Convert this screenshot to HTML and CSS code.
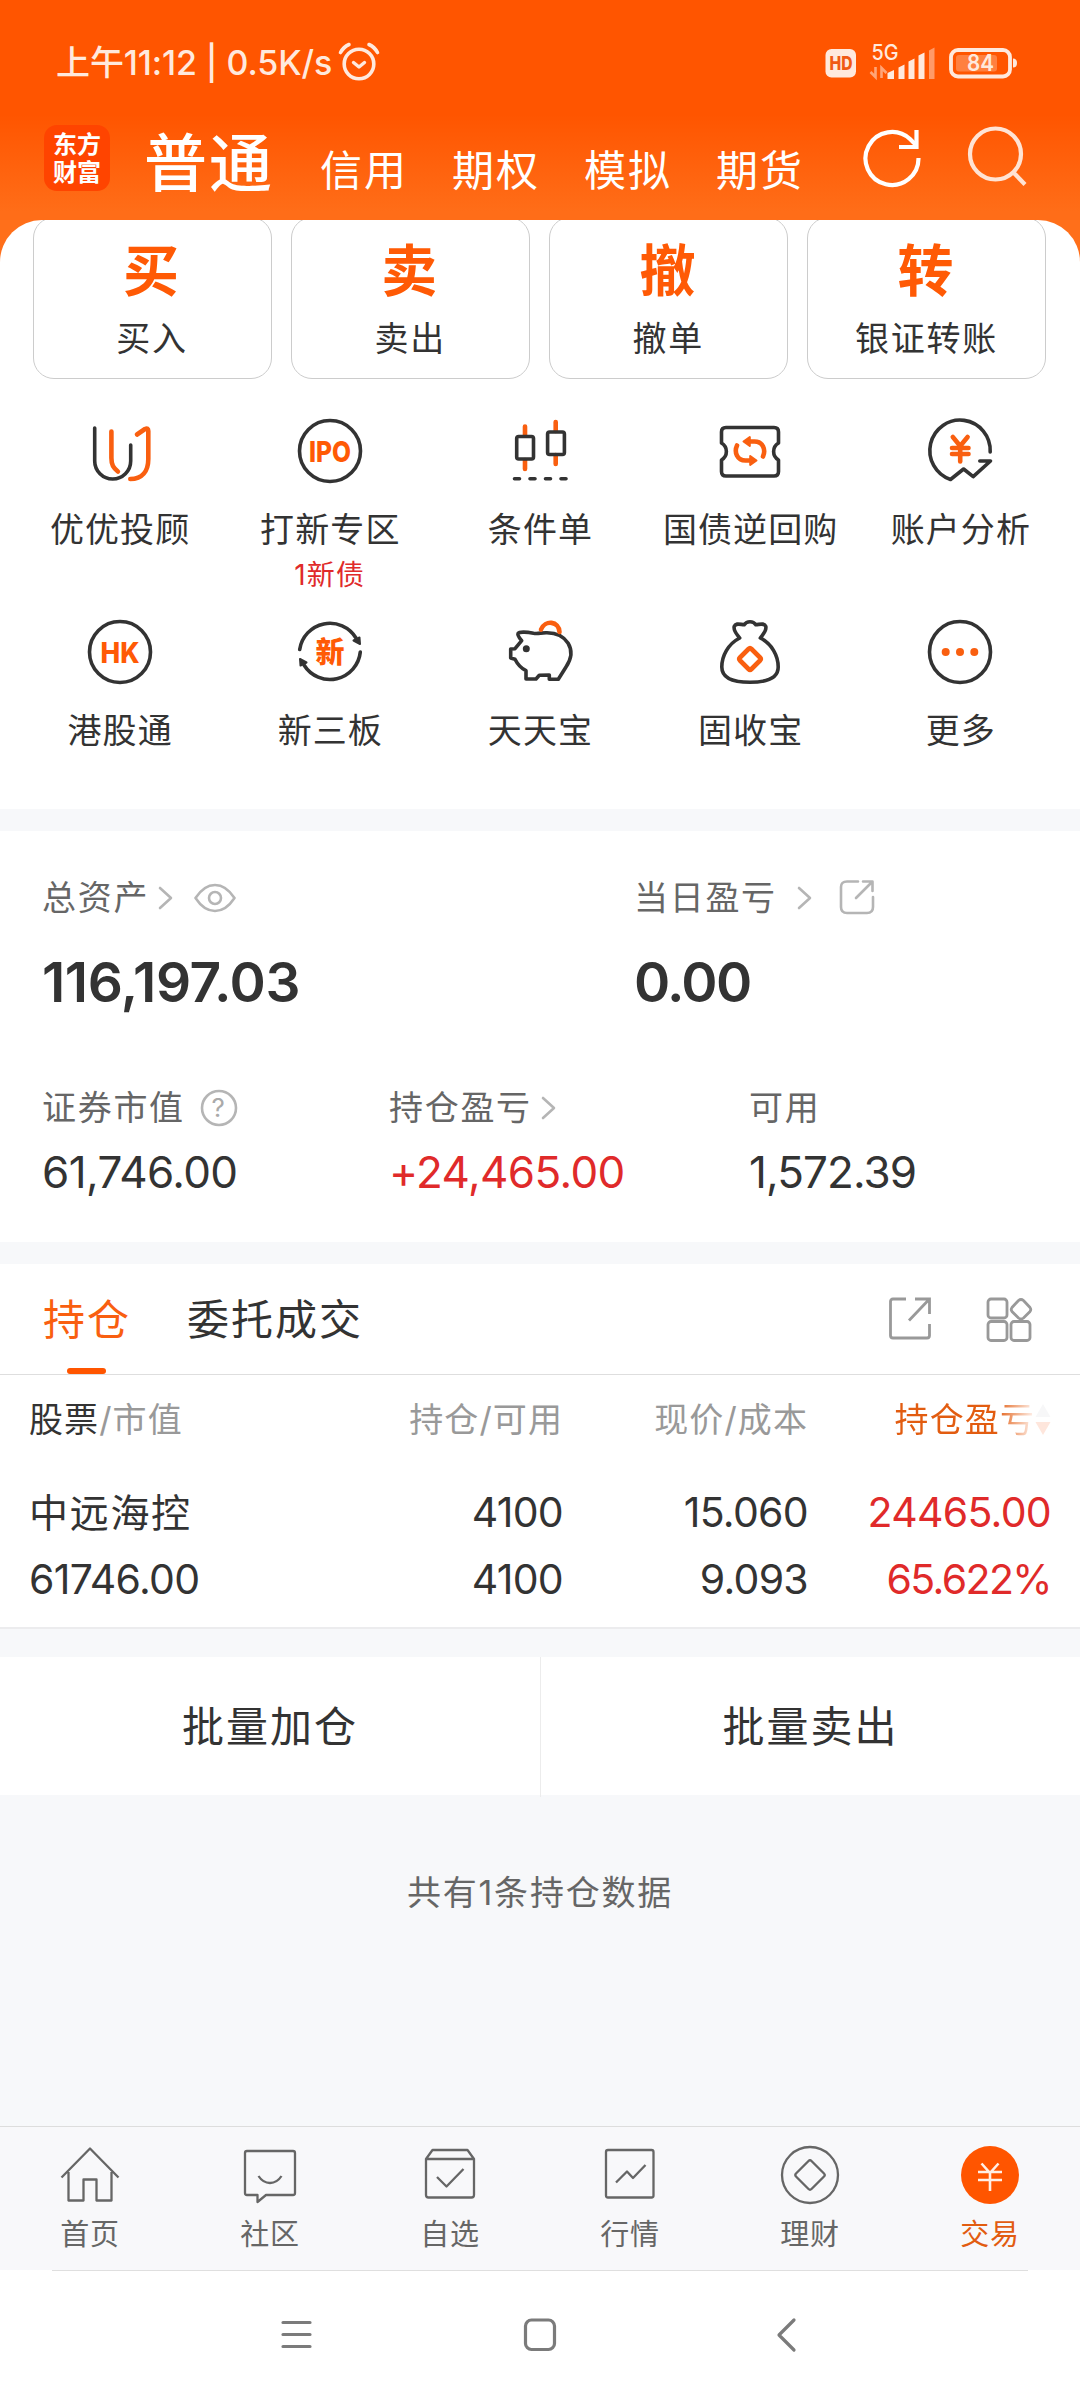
FILE: index.html
```html
<!DOCTYPE html>
<html lang="zh-CN">
<head>
<meta charset="utf-8">
<title>东方财富 交易</title>
<link rel="stylesheet" href="styles.css">
</head>
<body>
<div class="screen">
  <header class="top">
    <div class="status">
      <div class="status-left">
        <span class="clock">上午11:12 | 0.5K/s</span>
        <svg class="alarm" width="42" height="40" viewBox="0 0 42 40" fill="none" stroke="#ffe9dd" stroke-width="3.6" stroke-linecap="round" stroke-linejoin="round"><circle cx="21" cy="22" r="14.8"/><path d="M15.5 20.5l5.5 4.5 5.5-4.5" stroke-width="3.4"/><path d="M2.5 10.5q3-5.5 8.500-8M39.500 10.500q-3-5.500-8.500-8"/></svg>
      </div>
      <svg class="indicators" width="200" height="44" viewBox="0 0 200 44">
        <rect x="5.500" y="9" width="30.500" height="28.500" rx="6" fill="#ffe9dd"/>
        <text x="21" y="30" class="hd" text-anchor="middle" textLength="23" lengthAdjust="spacingAndGlyphs">HD</text>
        <text x="51.500" y="19.500" class="net" textLength="27" lengthAdjust="spacingAndGlyphs">5G</text>
        <path d="M55.500 27v10l-5-5M61.500 38V28l5 5" fill="none" stroke="#ffa578" stroke-width="2.600"/>
        <g fill="#ffe9dd"><path d="M67.500 33l6.500-3v9h-6.500zM78.500 27.500l6-3V39h-6zM88.500 21.500l6-3V39h-6zM98.500 15.500l6-3V39h-6z"/><path d="M109 10.500l5.500-3V39H109z" fill="#ff9a68"/></g>
        <rect x="131" y="10" width="59" height="26.500" rx="7" fill="none" stroke="#ffe9dd" stroke-width="3.800"/>
        <rect x="136" y="15" width="41" height="16.500" rx="3" fill="#ff8040"/>
        <path d="M193 18.500q4 0 4 4.500t-4 4.500z" fill="#ffe9dd"/>
        <text x="160.500" y="31" class="charge" text-anchor="middle" textLength="27" lengthAdjust="spacingAndGlyphs">84</text>
      </svg>
    </div>
    <nav class="account-nav">
      <div class="logo">东方<br>财富</div>
      <div class="account-tabs">
        <span class="account-tab current">普通</span>
        <span class="account-tab">信用</span>
        <span class="account-tab">期权</span>
        <span class="account-tab">模拟</span>
        <span class="account-tab">期货</span>
      </div>
      <div class="header-tools">
        <svg width="64" height="64" viewBox="0 0 64 64" fill="none" stroke="#fff" stroke-width="4.200"><path d="M57.500 33A26.500 26.500 0 1 1 49 14l6 6"/><path d="M55.500 5v17H38"/></svg>
        <svg width="64" height="64" viewBox="0 0 64 64" fill="none" stroke="#ffe3d4" stroke-width="4.200"><circle cx="28.500" cy="29" r="25.500"/><path d="M46 47l12 12.500"/></svg>
      </div>
    </nav>
  </header>

  <main>
    <div class="sheet-back">
      <section class="sheet">
        <div class="actions">
          <div class="action"><b>买</b><span>买入</span></div>
          <div class="action"><b>卖</b><span>卖出</span></div>
          <div class="action"><b>撤</b><span>撤单</span></div>
          <div class="action"><b>转</b><span>银证转账</span></div>
        </div>
        <div class="tools">
          <div class="tool">
            <svg class="ic" viewBox="0 0 100 100"><path d="M24.700 27V60a18 18 0 0 0 36 0V44"/><g class="o"><path d="M41.400 30.500V57c0 7 2 10 6.500 13.500M67 33.500l8-5.500q3.300-1.500 3.300 2V58c0 12-6 20-18 20"/></g></svg>
            <span>优优投顾</span>
          </div>
          <div class="tool">
            <svg class="ic" viewBox="0 0 100 100"><circle cx="50" cy="50" r="30.500"/><text x="50" y="60.500" textLength="42" lengthAdjust="spacingAndGlyphs">IPO</text></svg>
            <span>打新专区</span><em>1新债</em>
          </div>
          <div class="tool">
            <svg class="ic" viewBox="0 0 100 100"><g class="o"><path d="M35 25.500v9M35 59v9M65.700 21v9M65.700 54v9"/></g><rect x="26.700" y="35.500" width="16.800" height="22.500" rx="2"/><rect x="57.600" y="31" width="16.800" height="22.500" rx="2"/><path d="M24.500 77.700h5M40 77.700h5M55.500 77.700h5M71 77.700h5"/></svg>
            <span>条件单</span>
          </div>
          <div class="tool">
            <svg class="ic" viewBox="0 0 100 100"><path d="M26 26.500H74q4.500 0 4.500 4.500V42c-6.500 4-6.500 13 0 17V70.500q0 4.500-4.500 4.500H26q-4.500 0-4.500-4.500V59c6.500-4 6.500-13 0-17V31q0-4.500 4.500-4.500z"/><g class="o"><path d="M50 40.500h4.500C63 40.500 66 49 63 55.500M50 59.500h-4.500C37 59.500 34 51 37 44.500"/><path class="fill" d="M43.500 40.500l6.300-4.500v9zM56.500 59.500l-6.300 4.500v-9z" stroke-width="2"/></g></svg>
            <span>国债逆回购</span>
          </div>
          <div class="tool">
            <svg class="ic" viewBox="0 0 100 100"><path d="M80.200 51A30.200 30.500 0 1 0 40.500 78.500L53.600 68l9.600 7.700L80.500 60H69.800"/><g class="o"><path d="M42.800 36l7.400 9 7.400-9M50.200 45v15.500M42 47h16.500M42 53h16.500"/></g></svg>
            <span>账户分析</span>
          </div>
          <div class="tool">
            <svg class="ic" viewBox="0 0 100 100"><circle cx="50" cy="50" r="30.500"/><text x="50" y="60.500" textLength="39" lengthAdjust="spacingAndGlyphs">HK</text></svg>
            <span>港股通</span>
          </div>
          <div class="tool">
            <svg class="ic" viewBox="0 0 100 100"><path d="M19.700 47.500A30.500 30.500 0 0 1 76 36M80.300 50A30.500 30.500 0 0 1 24 63"/><path class="dark" d="M73.500 38.500l6-3 .5 6.500zM26.500 60.500l-6 3-.5-6.500z" stroke-width="2"/><text class="cn" x="50" y="61">新</text></svg>
            <span>新三板</span>
          </div>
          <div class="tool">
            <svg class="ic" viewBox="0 0 100 100"><path d="M31.700 38.700L25 46.700 20.700 47v9l4.300 1.300q4 8 11 11.400V77H46l3.300-3.700 10-.3v4.300h9L76 65C88 47 76 31 57 30.700c-6-.2-8 1.300-13.500.6-5-1-14-2-15.500.2-.8 1.500 1 4 3.700 7.200z"/><circle class="dark" cx="36.300" cy="46.700" r="2" stroke-width="3"/><g class="o"><path d="M51 27.500C55 17.500 69 19 69.500 30"/></g></svg>
            <span>天天宝</span>
          </div>
          <div class="tool">
            <svg class="ic" viewBox="0 0 100 100"><path d="M39.700 36C28 42 21.800 54 21.800 65c0 11 12 15.300 28.200 15.300S78.200 76 78.200 65C78.200 54 72 42 60.300 36c3-4 6.500-7 5.500-11.500-1.500-4-6-2-10-1.800-2.500-4-9.100-4-11.600 0-4-.2-8.500-2.200-10 1.800-1 4.500 2.500 7.500 5.500 11.500z"/><g class="o"><path d="M48.500 47l-8.500 8.500q-1.500 1.500 0 3l8.500 8.500q1.500 1.500 3 0l8.500-8.500q1.500-1.500 0-3L51.500 47q-1.500-1.500-3 0z" stroke-width="4.600"/></g></svg>
            <span>固收宝</span>
          </div>
          <div class="tool">
            <svg class="ic" viewBox="0 0 100 100"><circle cx="50" cy="50" r="30.500"/><g fill="#f95f10" stroke="none"><circle cx="35.700" cy="50" r="4"/><circle cx="50" cy="50" r="4"/><circle cx="64.300" cy="50" r="4"/></g></svg>
            <span>更多</span>
          </div>
        </div>
      </section>
    </div>

    <section class="assets">
      <div class="assets-main">
        <div>
          <div class="cap"><span>总资产</span>
            <svg class="chev" viewBox="0 0 16 24"><path d="M2 2l11 10L2 22"/></svg>
            <svg class="eye" viewBox="0 0 42 30"><path d="M1.500 15Q10 2 21 2t19.500 13Q32 28 21 28T1.500 15z"/><circle cx="21" cy="15" r="6"/></svg></div>
          <div class="big">116,197.03</div>
        </div>
        <div>
          <div class="cap"><span>当日盈亏</span>
            <svg class="chev far" viewBox="0 0 16 24"><path d="M2 2l11 10L2 22"/></svg>
            <svg class="share" viewBox="0 0 36 36"><path d="M19 2.500H8Q2 2.500 2 8v20q0 6 6 6h20q6 0 6-6V18M17 19L33 3M24 2.500h9.500V12"/></svg></div>
          <div class="big wide">0.00</div>
        </div>
      </div>
      <div class="assets-sub">
        <div>
          <div class="cap"><span>证券市值</span>
            <svg class="help" viewBox="0 0 38 38"><circle cx="19" cy="19" r="17"/><text x="19" y="28" text-anchor="middle">?</text></svg></div>
          <div class="mid">61,746.00</div>
        </div>
        <div>
          <div class="cap"><span>持仓盈亏</span><svg class="chev" viewBox="0 0 16 24"><path d="M2 2l11 10L2 22"/></svg></div>
          <div class="mid red">+24,465.00</div>
        </div>
        <div>
          <div class="cap"><span>可用</span></div>
          <div class="mid tight">1,572.39</div>
        </div>
      </div>
    </section>

    <section class="holdings">
      <div class="tabs">
        <div class="tab active">持仓</div>
        <div class="tab">委托成交</div>
        <div class="tab-tools">
          <svg width="44" height="46" viewBox="0 0 44 46"><path d="M18 3H5Q2.500 3 2.500 5.500v34Q2.500 42 5 42h34q2.500 0 2.500-2.500V28M21 24.500L41 3.500M27 3h14.500v15"/></svg>
          <svg width="50" height="46" viewBox="0 0 50 46"><rect x="4" y="3" width="19" height="19" rx="3"/><rect x="4" y="25.500" width="19" height="19" rx="3"/><rect x="27" y="25.500" width="19" height="19" rx="3"/><path d="M34.500 4.500l-6.500 7q-1.500 2 0 4l6.500 6.500q2.500 2 5 0l6.500-6.500q1.500-2 0-4l-6.500-7q-2.500-2-5 0z"/></svg>
        </div>
      </div>
      <div class="grid head">
        <div><span class="ink">股票</span>/市值</div>
        <div>持仓/可用</div>
        <div>现价/成本</div>
        <div class="sort"><span>持仓盈亏</span><svg width="16" height="34" viewBox="0 0 16 34"><path d="M8 1l7.500 13H.5z" fill="#f7f7f8"/><path d="M8 32l7.500-13H.5z" fill="#fee6dc"/></svg></div>
      </div>
      <div class="grid row">
        <div class="name">中远海控</div><div>4100</div><div>15.060</div><div class="red">24465.00</div>
        <div>61746.00</div><div>4100</div><div>9.093</div><div class="red percent">65.622%</div>
      </div>
    </section>

    <section class="batch"><div>批量加仓</div><div>批量卖出</div></section>
    <p class="note">共有1条持仓数据</p>
  </main>

  <nav class="bottom">
    <div class="item"><svg viewBox="0 0 64 64"><path d="M3.500 34.500L32 5.500l28.500 29M10.500 29v28.500h15V36.500h13v21h15V29"/></svg><span>首页</span></div>
    <div class="item"><svg viewBox="0 0 64 64"><path d="M9 8h46q2 0 2 2v40q0 2-2 2H28l-8.500 7V52H9q-2 0-2-2V10q0-2 2-2z"/><path d="M20.500 33q4.500 7 11.500 7t11.500-7"/></svg><span>社区</span></div>
    <div class="item"><svg viewBox="0 0 64 64"><path d="M8 16l6.500-9h35L56 16v36q0 2.500-2.500 2.500h-43Q8 54.500 8 52zM8 16h48M19 34l9.500 9.500L45.500 26"/></svg><span>自选</span></div>
    <div class="item"><svg viewBox="0 0 64 64"><rect x="8" y="7" width="47.500" height="47.500" rx="2"/><path d="M18 39.500l11-11 6 6.500 12.500-13"/></svg><span>行情</span></div>
    <div class="item"><svg viewBox="0 0 64 64"><circle cx="32" cy="32" r="28"/><path d="M30.500 18L18 30.500q-1.500 1.500 0 3L30.500 46q1.500 1.500 3 0L46 33.500q1.500-1.500 0-3L33.500 18q-1.500-1.500-3 0z"/></svg><span>理财</span></div>
    <div class="item on"><svg viewBox="0 0 64 64"><circle cx="32" cy="32" r="29" fill="#ff5500" stroke="none"/><path d="M23.500 20.500L32 30l8.500-9.500M32 30v18M20 29h24M20 37h24" stroke="#ffeee5" stroke-width="2.600"/></svg><span>交易</span></div>
  </nav>
  <div class="system">
    <svg width="40" height="40" viewBox="0 0 40 40"><path d="M6 7.500h27M6 19.500h27M6 31.500h27" stroke-linecap="round"/></svg>
    <svg width="40" height="40" viewBox="0 0 40 40"><rect x="5.500" y="5" width="29" height="29.500" rx="6"/></svg>
    <svg width="40" height="40" viewBox="0 0 40 40"><path d="M31 5L16 20l15 15" stroke-linecap="round" stroke-linejoin="round"/></svg>
  </div>
</div>
</body>
</html>
```
FILE: styles.css
```css
* { box-sizing: border-box; margin: 0; padding: 0; }

body {
  width: 1080px;
  height: 2400px;
  overflow: hidden;
  background: #f7f8fa;
  color: #333;
  font-family: Inter, "Noto Sans CJK SC", sans-serif;
}

.screen { display: flex; flex-direction: column; width: 1080px; height: 2400px; }
main { flex: 1; }
svg { display: block; flex: none; }

/* header */
.top {
  height: 220px;
  padding-top: 40px;
  background: linear-gradient(#ff5500 52%, #ff6d18 96%);
  color: #fff;
}
.status { display: flex; justify-content: space-between; height: 44px; padding: 0 60px 0 56px; }
.status-left { display: flex; align-items: center; gap: 6px; color: #ffe9dd; }
.clock { padding-top: 2px; font-size: 34px; line-height: 44px; font-weight: 500; white-space: pre; letter-spacing: -0.1px; }
.hd { font: 800 19px Inter, sans-serif; fill: #f05a14; }
.net { font: 500 21px Inter, sans-serif; fill: #ffe9dd; }
.charge { font: 600 23px Inter, sans-serif; fill: #ffe9dd; }

.account-nav { display: flex; height: 136px; padding: 41px 47px 0 44px; }
.logo {
  width: 66px;
  height: 66px;
  padding-top: 4px;
  border-radius: 13px;
  background: #ff4400;
  font: 700 24px/28px "Noto Sans CJK SC", sans-serif;
  text-align: center;
}
.account-tabs { display: flex; align-items: baseline; gap: 44px; margin: 1px 0 0 34px; height: 80px; }
.account-tab { font-size: 42px; line-height: 74px; letter-spacing: 2px; white-space: nowrap; }
.account-tab.current { font-size: 63px; letter-spacing: 2px; margin-right: 2px; font-weight: 500; }
.header-tools { display: flex; gap: 42px; margin: 0 2px 0 auto; }

/* white sheet */
.sheet-back { background: #ff6f1a; }
.sheet { height: 589px; border-radius: 42px 42px 0 0; background: #fff; overflow: hidden; }
.actions { display: grid; grid-template-columns: repeat(4, 239px); gap: 19.200px; margin: -3px 0 0 32.500px; }
.action {
  display: flex;
  flex-direction: column;
  align-items: center;
  height: 162px;
  padding-top: 22px;
  border: 1.500px solid #ccc;
  border-radius: 21px;
}
.action b { margin-right: 2px; font-size: 56px; line-height: 62px; color: #ff5a05; }
.action span { margin-top: 17px; font-size: 34px; line-height: 40px; letter-spacing: 1.800px; }
.tools { display: grid; grid-template-columns: repeat(5, 210.200px); grid-auto-rows: 201px; margin: 22px 0 0 14.500px; }
.tool { display: flex; flex-direction: column; align-items: center; white-space: nowrap; }
.tool span { margin-top: 9px; padding-left: 1px; font-size: 34px; line-height: 40px; letter-spacing: 1.100px; }
.tool em { margin-top: 8px; font-style: normal; font-size: 28px; line-height: 34px; letter-spacing: 1.200px; color: #e02a2a; }
.ic { width: 100px; height: 100px; fill: none; stroke: #333; stroke-width: 3.600; stroke-linecap: round; stroke-linejoin: round; }
.ic .o { stroke: #f95f10; stroke-width: 4.600; }
.ic .fill { fill: #f95f10; }
.ic .dark { fill: #333; }
.ic text { font: 800 29px Inter, sans-serif; fill: #ff5a05; stroke: none; text-anchor: middle; }
.ic .cn { font: 900 29px "Noto Sans CJK SC", sans-serif; }

/* assets */
.assets { height: 411px; margin-top: 22px; padding: 47px 0 0 42px; background: #fff; }
.assets-main { display: grid; grid-template-columns: 592px 1fr; }
.assets-sub { display: grid; grid-template-columns: 347px 360px 1fr; margin-top: 81px; }
.cap { display: flex; align-items: center; height: 40px; color: #666; font-size: 34px; line-height: 40px; letter-spacing: 1.700px; }
.cap svg { fill: none; stroke: #b5b5b5; stroke-width: 2.600; stroke-linecap: round; stroke-linejoin: round; }
.chev { width: 16px; height: 24px; margin-left: 9px; }
.chev.far { margin-left: 20px; }
.eye { width: 42px; height: 30px; margin-left: 20px; }
.share { width: 36px; height: 36px; margin: -3px 0 0 26px; }
.help { width: 38px; height: 38px; margin-left: 15px; }
.help text { font: 400 26px Inter, sans-serif; fill: #aaa; stroke: none; }
.big { height: 50px; margin-top: 39px; font-size: 55px; line-height: 50px; font-weight: 600; letter-spacing: -0.400px; }
.big.wide { letter-spacing: -1.700px; }
.mid { height: 44px; margin-top: 22px; font-size: 44px; line-height: 44px; letter-spacing: -0.600px; }
.mid.tight { letter-spacing: -0.900px; }
.red { color: #e02a2a; }

/* holdings */
.holdings { height: 365px; margin-top: 22px; background: #fff; border-bottom: 2px solid #ececee; }
.tabs { display: flex; height: 111px; padding-left: 43px; border-bottom: 1.500px solid #dedede; }
.tab { position: relative; height: 110px; margin-right: 56px; font-size: 42px; line-height: 112px; letter-spacing: 2px; }
.tab.active { color: #f95f10; }
.tab.active::after { content: ""; position: absolute; left: 24px; bottom: 0; width: 39px; height: 6px; border-radius: 3px; background: #ff5500; }
.tab-tools { display: flex; gap: 52px; margin: 32px 46px 0 auto; }
.tab-tools svg { fill: none; stroke: #999; stroke-width: 2.800; }
.grid { display: grid; grid-template-columns: 301px 233px 245px 243px; padding: 0 29px; white-space: nowrap; text-align: right; }
.grid > :nth-child(4n + 1) { text-align: left; }
.head { height: 90px; font-size: 34px; line-height: 90px; letter-spacing: 1.100px; color: #999; }
.ink { color: #333; }
.sort { display: flex; justify-content: flex-end; align-items: center; height: 90px; }
.sort span { background: linear-gradient(90deg, #e25c10 72%, #fdebe2 98%); background-clip: text; -webkit-background-clip: text; color: transparent; }
.row { grid-auto-rows: 67px; padding-top: 14px; font-size: 41px; line-height: 67px; letter-spacing: -0.700px; }
.row .name { font-size: 39px; letter-spacing: 1.700px; }
.row .percent { letter-spacing: -1.600px; }

.batch { display: grid; grid-template-columns: 1fr 1fr; height: 138px; margin-top: 28px; background: #fff; font-size: 42px; line-height: 140px; letter-spacing: 2px; text-align: center; }
.batch div + div { border-left: 1px solid #ececec; }
.note { margin-top: 78px; font-size: 34px; line-height: 40px; letter-spacing: 1.800px; text-align: center; color: #666; }

/* bottom tab bar */
.bottom { display: grid; grid-template-columns: repeat(6, 180px); height: 144px; padding-top: 16px; border-top: 1px solid #ddd; background: #f8f8fa; }
.item { display: flex; flex-direction: column; align-items: center; font-size: 29px; line-height: 36px; letter-spacing: 0.800px; color: #666; }
.item svg { width: 64px; height: 64px; margin-bottom: 10px; fill: none; stroke: #666; stroke-width: 2.300; stroke-linejoin: round; }
.item.on { color: #e25c10; }

.system { display: flex; justify-content: center; gap: 203px; height: 130px; padding: 45px 0 0 0; background: linear-gradient(#dfdfdf, #dfdfdf) center top / 976px 1px no-repeat #fff; }
.system svg { fill: none; stroke: #7b7b7b; stroke-width: 3.200; }
```
